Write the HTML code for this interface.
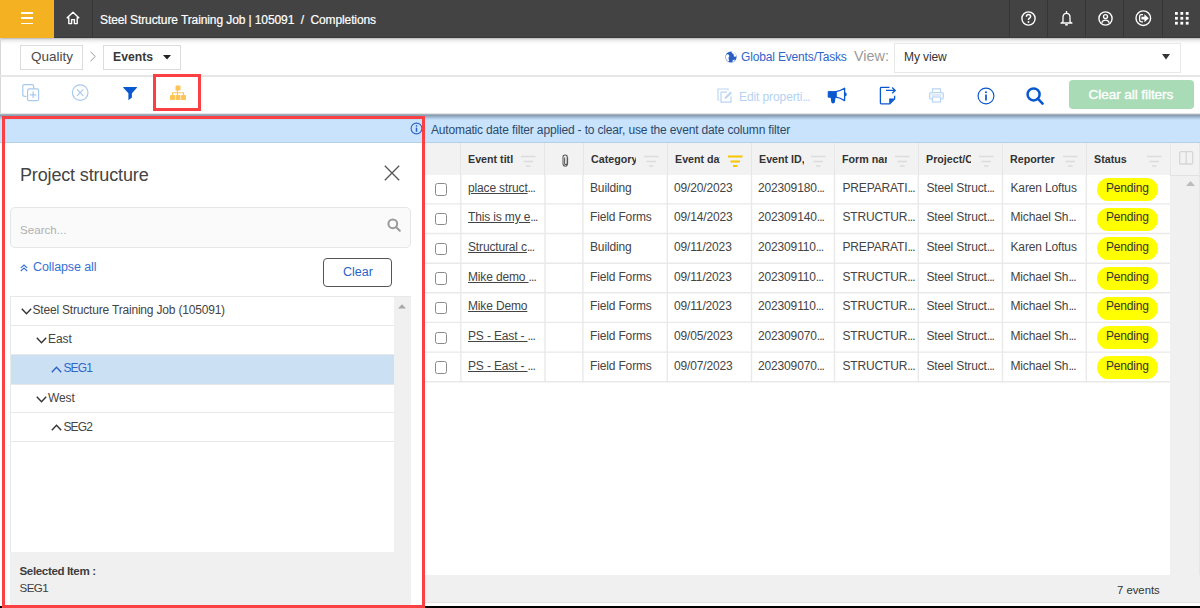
<!DOCTYPE html>
<html><head><meta charset="utf-8">
<style>
*{box-sizing:border-box;margin:0;padding:0}
html,body{width:1200px;height:608px;overflow:hidden;background:#fff;font-family:"Liberation Sans",sans-serif;color:#424242}
.a{position:absolute}
.t{position:absolute;white-space:nowrap;line-height:1}
svg{position:absolute;overflow:visible}
</style></head><body>
<!-- top header -->
<div class="a" style="left:0;top:0;width:1200px;height:38px;background:#434343"></div>
<div class="a" style="left:0;top:0;width:54px;height:38px;background:#f4b223"></div>
<div class="a" style="left:92px;top:0;width:1px;height:38px;background:#353535"></div>
<div class="a" style="left:21px;top:12px;width:12px;height:1.5px;background:#fff"></div>
<div class="a" style="left:21px;top:17.3px;width:12px;height:1.5px;background:#fff"></div>
<div class="a" style="left:21px;top:22.6px;width:12px;height:1.5px;background:#fff"></div>
<svg style="left:66px;top:11px" width="14" height="14" viewBox="0 0 14 14"><path d="M7 1.2 L1.2 6.8 H2.8 V12.6 H5.6 V8.6 H8.4 V12.6 H11.2 V6.8 H12.8 Z" fill="none" stroke="#fff" stroke-width="1.4" stroke-linejoin="round"/></svg>
<div class="t" style="left:100px;top:14px;font-size:12px;color:#fff;letter-spacing:-0.1px;-webkit-text-stroke:0.2px #fff">Steel Structure Training Job | 105091&nbsp; /&nbsp; Completions</div>
<div class="a" style="left:1009px;top:0;width:1px;height:38px;background:#353535"></div>
<div class="a" style="left:1047px;top:0;width:1px;height:38px;background:#353535"></div>
<div class="a" style="left:1085px;top:0;width:1px;height:38px;background:#353535"></div>
<div class="a" style="left:1123px;top:0;width:1px;height:38px;background:#353535"></div>
<div class="a" style="left:1162px;top:0;width:1px;height:38px;background:#353535"></div>
<!-- help -->
<svg style="left:1021px;top:11px" width="15" height="15" viewBox="0 0 15 15"><circle cx="7.5" cy="7.5" r="6.6" fill="none" stroke="#fff" stroke-width="1.4"/><path d="M5.4 5.8 Q5.4 3.6 7.5 3.6 Q9.6 3.6 9.6 5.6 Q9.6 6.8 8.2 7.4 Q7.5 7.8 7.5 9" fill="none" stroke="#fff" stroke-width="1.5"/><circle cx="7.5" cy="11" r="0.9" fill="#fff"/></svg>
<!-- bell -->
<svg style="left:1059px;top:10px" width="15" height="16" viewBox="0 0 15 16"><path d="M4 11.6 V7.4 Q4 3.4 7.5 3.4 Q11 3.4 11 7.4 V11.6 Q11.6 12.6 13 13 H2 Q3.4 12.6 4 11.6 Z" fill="none" stroke="#fff" stroke-width="1.3" stroke-linejoin="round"/><path d="M7.5 1 V3.4" stroke="#fff" stroke-width="1.4"/><path d="M6.2 14.8 H8.8" stroke="#fff" stroke-width="1.5"/></svg>
<!-- user -->
<svg style="left:1097.5px;top:10.5px" width="15" height="15" viewBox="0 0 15 15"><circle cx="7.5" cy="7.5" r="6.6" fill="none" stroke="#fff" stroke-width="1.4"/><circle cx="7.5" cy="5.6" r="2" fill="none" stroke="#fff" stroke-width="1.3"/><path d="M3.8 11.8 Q4.6 9.2 7.5 9.2 Q10.4 9.2 11.2 11.8" fill="none" stroke="#fff" stroke-width="1.3"/></svg>
<!-- logout -->
<svg style="left:1135px;top:10px" width="17" height="17" viewBox="0 0 17 17"><circle cx="8.3" cy="8.2" r="7.3" fill="none" stroke="#fff" stroke-width="1.4"/><path d="M8 4.6 H6.3 Q4.6 4.6 4.6 6.3 V10.1 Q4.6 11.8 6.3 11.8 H8" fill="none" stroke="#fff" stroke-width="1.3"/><path d="M6.4 6.8 H9.4 V4.2 L13.8 8.2 L9.4 12.2 V9.6 H6.4 Z" fill="#fff"/></svg>
<!-- grid -->
<svg style="left:1175px;top:12px" width="14" height="13" viewBox="0 0 14 13" fill="#fff"><rect x="0" y="0" width="2.8" height="2.8"/><rect x="5.4" y="0" width="2.8" height="2.8"/><rect x="10.8" y="0" width="2.8" height="2.8"/><rect x="0" y="4.9" width="2.8" height="2.8"/><rect x="5.4" y="4.9" width="2.8" height="2.8"/><rect x="10.8" y="4.9" width="2.8" height="2.8"/><rect x="0" y="9.8" width="2.8" height="2.8"/><rect x="5.4" y="9.8" width="2.8" height="2.8"/><rect x="10.8" y="9.8" width="2.8" height="2.8"/></svg>

<!-- header shadow -->
<div class="a" style="left:54px;top:37px;width:1146px;height:1px;background:#3a3a3a"></div>
<div class="a" style="left:0;top:38px;width:1200px;height:6px;background:linear-gradient(#b8b8b8,#e6e6e6 30%,#f6f6f6 65%,#fff)"></div>
<div class="a" style="left:0;top:38px;width:1px;height:76px;background:#d8d8d8"></div>

<!-- breadcrumb row -->
<div class="a" style="left:20px;top:45px;width:63px;height:25px;border:1px solid #dcdcdc"></div>
<div class="t" style="left:31px;top:49.5px;font-size:13.5px;color:#4a4a4a">Quality</div>
<svg style="left:88.5px;top:51px" width="8" height="11" viewBox="0 0 8 11"><path d="M1.5 0.8 L6.3 5.5 L1.5 10.2" fill="none" stroke="#9a9a9a" stroke-width="1"/></svg>
<div class="a" style="left:103px;top:45px;width:78px;height:25px;border:1px solid #dcdcdc"></div>
<div class="t" style="left:113px;top:50.5px;font-size:12.2px;font-weight:bold;color:#383838">Events</div>
<svg style="left:163px;top:55px" width="8" height="5" viewBox="0 0 8 5"><path d="M0 0 H8 L4 4.5 Z" fill="#222"/></svg>

<svg style="left:725px;top:51px" width="12" height="12" viewBox="0 0 12 12"><circle cx="6" cy="6" r="5.6" fill="#2a5fc4"/><path d="M1.6 3.4 Q3.4 3 4.2 4.4 Q4.6 5.6 3.6 6.4 Q3.2 7.6 4.2 9.4 L3.4 10.6 Q1 9 0.6 6 Z" fill="#fff"/><path d="M6.4 0.6 Q6.6 2.4 8 2.8 Q9 3 8.8 4.2 Q8.4 5.2 9.6 5.8 Q10.6 6 11.4 5 Q11 2 8.4 0.8 Z" fill="#fff"/><path d="M7 10.4 Q8 8.6 9.6 8.4 Q10 9.6 8.6 10.8 Z" fill="#fff"/></svg>
<div class="t" style="left:741px;top:51px;font-size:12px;letter-spacing:-0.16px;color:#2f66c8">Global Events/Tasks</div>
<div class="t" style="left:854px;top:49px;font-size:14.4px;color:#9a9a9a">View:</div>
<div class="a" style="left:894px;top:43px;width:287px;height:30px;border:1px solid #e8e8e8"></div>
<div class="t" style="left:904px;top:50.5px;font-size:12px;letter-spacing:-0.1px;color:#333">My view</div>
<svg style="left:1162px;top:54px" width="8" height="6" viewBox="0 0 8 6"><path d="M0 0 H8 L4 5.5 Z" fill="#333"/></svg>

<div class="a" style="left:0;top:75px;width:1200px;height:1.5px;background:#e6e6e6"></div>

<!-- toolbar -->
<svg style="left:22px;top:84px" width="18" height="18" viewBox="0 0 18 18"><path d="M4.5 12.3 H2.5 Q0.8 12.3 0.8 10.6 V2 Q0.8 0.6 2.3 0.6 H10.2 Q11.6 0.6 11.6 2 V4.8" fill="none" stroke="#a9c9ef" stroke-width="1.2"/><rect x="5.6" y="4.9" width="11" height="11.8" rx="1.5" fill="none" stroke="#a9c9ef" stroke-width="1.2"/><path d="M11.1 7.6 V14 M7.9 10.8 H14.3" stroke="#a9c9ef" stroke-width="1.2"/></svg>
<svg style="left:71px;top:84px" width="18" height="18" viewBox="0 0 18 18"><circle cx="9.2" cy="8.6" r="7.8" fill="none" stroke="#a9c9ef" stroke-width="1.2"/><path d="M6 5.4 L12.4 11.8 M12.4 5.4 L6 11.8" stroke="#a9c9ef" stroke-width="1.2"/></svg>
<svg style="left:123px;top:86.6px" width="15" height="14" viewBox="0 0 15 14"><path d="M0.6 0 H13.6 Q14.4 0 13.9 0.7 L8.9 6.2 V10.4 L5.4 13.3 V6.2 L0.3 0.7 Q-0.2 0 0.6 0 Z" fill="#0a58cf"/></svg>
<div class="a" style="left:153px;top:74px;width:48px;height:37px;border:3px solid #fb4044"></div>
<svg style="left:170px;top:85px" width="17" height="15" viewBox="0 0 17 15" fill="#fcc556"><rect x="5.5" y="0.6" width="5" height="5" rx="0.8"/><rect x="0" y="10" width="5" height="5" rx="0.8"/><rect x="5.5" y="10" width="5" height="5" rx="0.8"/><rect x="11" y="10" width="5" height="5" rx="0.8"/><path d="M7.5 5 V10 M2.5 10 V7.8 H13.5 V10" fill="none" stroke="#fcc556" stroke-width="1.1"/></svg>

<svg style="left:717px;top:88px" width="16" height="15" viewBox="0 0 16 15"><path d="M2.5 12 H1 V1 H11 V2.5" fill="none" stroke="#b9d5f4" stroke-width="1.1"/><path d="M10 4.2 H4 V14.2 H14 V8.5" fill="none" stroke="#b9d5f4" stroke-width="1.2"/><path d="M7.5 11 L8 9 L13.5 3.5 L15 5 L9.5 10.5 Z" fill="#b9d5f4"/></svg>
<div class="t" style="left:739px;top:91px;font-size:12px;letter-spacing:-0.1px;color:#b4d2f3">Edit properti<span style="letter-spacing:-0.9px">...</span></div>
<svg style="left:820px;top:82px" width="80" height="26" viewBox="820 82 80 26"><path d="M828.2 91.6 H836 V97.2 H828.2 Z" fill="#0a58cf" stroke="#0a58cf" stroke-width="1" stroke-linejoin="round"/><path d="M836 91.6 Q840 91 844.6 88.2 V100.6 Q840 97.8 836 97.2 Z" fill="none" stroke="#0a58cf" stroke-width="1.3" stroke-linejoin="round"/><path d="M845.2 92.8 Q846.8 94.4 845.2 96" fill="none" stroke="#0a58cf" stroke-width="1.4"/><path d="M830.6 97 H835.6 L835 101.5 Q835 103.4 833 103.4 Q831.4 103.4 831.2 101.8 Z" fill="#0a58cf"/><path d="M889.5 87.4 H881.2 Q880.4 87.4 880.4 88.2 V103 Q880.4 103.8 881.2 103.8 H889.8 L894.6 99 V95.8" fill="none" stroke="#0a58cf" stroke-width="1.3" stroke-linejoin="round"/><path d="M889.2 103.8 V98.4 H894.6 Z" fill="#0a58cf"/><path d="M886 90.4 H895 M892.2 87.6 L895.2 90.4 L892.2 93.2" fill="none" stroke="#0a58cf" stroke-width="1.3"/></svg>
<svg style="left:929px;top:88px" width="15" height="15" viewBox="0 0 15 15"><path d="M3.5 4.5 V0.8 H11.5 V4.5" fill="none" stroke="#b9d5f4" stroke-width="1.2"/><rect x="0.7" y="4.6" width="13.6" height="6.5" rx="1.5" fill="none" stroke="#b9d5f4" stroke-width="1.3"/><rect x="3.5" y="9" width="8" height="5" fill="#fff" stroke="#b9d5f4" stroke-width="1.2"/><path d="M2.5 7 H12.5" stroke="#b9d5f4" stroke-width="1"/></svg>
<svg style="left:977px;top:86.5px" width="18" height="18" viewBox="0 0 18 18"><circle cx="9" cy="9" r="7.9" fill="none" stroke="#0a58cf" stroke-width="1.15"/><circle cx="9" cy="5.2" r="1" fill="#0a58cf"/><path d="M9 7.4 V13.4" stroke="#0a58cf" stroke-width="1.7"/></svg>
<svg style="left:1026px;top:87px" width="19" height="19" viewBox="0 0 19 19"><circle cx="7.6" cy="7.4" r="6" fill="none" stroke="#0a58cf" stroke-width="2.5"/><path d="M11.8 11.6 L16.6 16.6" stroke="#0a58cf" stroke-width="2.6" stroke-linecap="round"/></svg>
<div class="a" style="left:1069px;top:80px;width:125px;height:29px;border-radius:4px;background:#a9dcb6"></div>
<div class="t" style="left:1088.5px;top:88.2px;font-size:13.6px;letter-spacing:-0.08px;-webkit-text-stroke:0.35px #fff;color:#fff">Clear all filters</div>

<div class="a" style="left:0;top:113px;width:1200px;height:1px;background:#e4e4e4"></div>
<div class="a" style="left:0;top:114px;width:1200px;height:1px;background:#a6b0bb"></div>

<!-- LEFT PANEL -->

<div class="a" style="left:0;top:606px;width:2px;height:2px;background:#000"></div>
<div class="a" style="left:2px;top:143px;width:423px;height:465px;background:#fff"></div>
<div class="a" style="left:0;top:115px;width:425px;height:28px;background:#c9e3fc;border-bottom:1px solid #b6cfe8"></div>
<div class="a" style="left:0;top:115px;width:425px;height:5px;background:linear-gradient(#8196ae,#c9e3fc)"></div>

<svg style="left:410px;top:121.5px" width="13" height="13" viewBox="0 0 13 13"><circle cx="6.5" cy="6.5" r="5.4" fill="none" stroke="#2a62c9" stroke-width="1.1"/><circle cx="6.5" cy="3.9" r="0.8" fill="#2a62c9"/><path d="M6.5 5.6 V9.8" stroke="#2a62c9" stroke-width="1.5"/></svg>
<div class="t" style="left:20px;top:166px;font-size:18px;color:#444;letter-spacing:-0.15px">Project structure</div>
<svg style="left:384px;top:165px" width="16" height="16" viewBox="0 0 16 16"><path d="M0.8 0.8 L15.2 15.2 M15.2 0.8 L0.8 15.2" stroke="#555" stroke-width="1.3"/></svg>
<div class="a" style="left:10px;top:207px;width:401px;height:41px;border:1px solid #e6e6e6;border-radius:5px;background:#fafafa"></div>
<div class="t" style="left:20px;top:224px;font-size:11.6px;color:#b0b0b0">Search...</div>
<svg style="left:387px;top:218px" width="14" height="14" viewBox="0 0 14 14"><circle cx="5.8" cy="5.8" r="4.4" fill="none" stroke="#9a9a9a" stroke-width="2"/><path d="M9 9 L12.8 12.8" stroke="#9a9a9a" stroke-width="2" stroke-linecap="round"/></svg>
<svg style="left:19.5px;top:263.5px" width="8" height="8" viewBox="0 0 8 8"><path d="M0.8 3.9 L4 1 L7.2 3.9 M0.8 7 L4 4.1 L7.2 7" fill="none" stroke="#3570d4" stroke-width="1.1"/></svg>
<div class="t" style="left:33px;top:261.3px;font-size:12.5px;letter-spacing:-0.1px;color:#3570d4">Collapse all</div>
<div class="a" style="left:323px;top:258px;width:69px;height:29px;border:1px solid #555;border-radius:4px"></div>
<div class="t" style="left:343px;top:266px;font-size:12.5px;color:#2a62c9">Clear</div>

<!-- tree -->
<div class="a" style="left:10px;top:296px;width:401px;height:256px;border:1px solid #e8e8e8;border-right:none;border-bottom:none"></div>
<div class="a" style="left:394px;top:297px;width:17px;height:255px;background:#f0f0f0"></div>
<svg style="left:398px;top:303.5px" width="8" height="5" viewBox="0 0 8 5"><path d="M0 4.5 H8 L4 0.3 Z" fill="#a8a8a8"/></svg>
<div class="a" style="left:11px;top:325px;width:383px;height:1px;background:#e8e8e8"></div>
<div class="a" style="left:11px;top:355px;width:383px;height:28.5px;background:#cce0f4"></div>
<div class="a" style="left:11px;top:354px;width:383px;height:1px;background:#e8e8e8"></div>
<div class="a" style="left:11px;top:384px;width:383px;height:1px;background:#e8e8e8"></div>
<div class="a" style="left:11px;top:412px;width:383px;height:1px;background:#e8e8e8"></div>
<div class="a" style="left:11px;top:441px;width:383px;height:1px;background:#e8e8e8"></div>
<svg style="left:21px;top:308px" width="11" height="7" viewBox="0 0 11 7"><path d="M0.8 0.8 L5.5 5.8 L10.2 0.8" fill="none" stroke="#333" stroke-width="1.4"/></svg>
<div class="t" style="left:32.5px;top:304px;font-size:12px;letter-spacing:-0.19px;color:#444">Steel Structure Training Job (105091)</div>
<svg style="left:36px;top:337px" width="11" height="7" viewBox="0 0 11 7"><path d="M0.8 0.8 L5.5 5.8 L10.2 0.8" fill="none" stroke="#333" stroke-width="1.4"/></svg>
<div class="t" style="left:48px;top:333px;font-size:12px;letter-spacing:-0.1px;color:#444">East</div>
<svg style="left:51px;top:366px" width="11" height="7" viewBox="0 0 11 7"><path d="M0.8 6.2 L5.5 1.2 L10.2 6.2" fill="none" stroke="#2a62c9" stroke-width="1.4"/></svg>
<div class="t" style="left:63.5px;top:361.5px;font-size:12px;letter-spacing:-0.9px;color:#2f66c8">SEG1</div>
<svg style="left:36px;top:396px" width="11" height="7" viewBox="0 0 11 7"><path d="M0.8 0.8 L5.5 5.8 L10.2 0.8" fill="none" stroke="#333" stroke-width="1.4"/></svg>
<div class="t" style="left:48px;top:391.5px;font-size:12px;letter-spacing:-0.1px;color:#444">West</div>
<svg style="left:51px;top:424px" width="11" height="7" viewBox="0 0 11 7"><path d="M0.8 6.2 L5.5 1.2 L10.2 6.2" fill="none" stroke="#333" stroke-width="1.4"/></svg>
<div class="t" style="left:63.5px;top:420.5px;font-size:12px;letter-spacing:-0.9px;color:#444">SEG2</div>

<!-- panel footer -->
<div class="a" style="left:10px;top:552px;width:401px;height:53px;background:#f0f0f0"></div>
<div class="t" style="left:19.5px;top:565px;font-size:11.6px;font-weight:bold;letter-spacing:-0.38px;color:#3d3d3d">Selected Item :</div>
<div class="t" style="left:19.5px;top:582px;font-size:11.6px;letter-spacing:-0.6px;color:#3d3d3d">SEG1</div>

<!-- red panel border -->
<div class="a" style="left:2px;top:116px;width:423px;height:492px;border:3px solid #fb4044"></div>

<!-- RIGHT GRID -->
<div class="a" style="left:425px;top:115px;width:775px;height:28px;background:#c9e3fc;border-bottom:1px solid #b6cfe8"></div>
<div class="a" style="left:425px;top:115px;width:775px;height:5px;background:linear-gradient(#8196ae,#c9e3fc)"></div>
<div class="t" style="left:431px;top:123.5px;font-size:12px;letter-spacing:-0.16px;color:#2b4a6b">Automatic date filter applied - to clear, use the event date column filter</div>
<div id="grid"></div>
<div class="a" style="left:425px;top:143px;width:775px;height:32px;background:#f2f2f2"></div>
<div class="a" style="left:1170px;top:175px;width:30px;height:401px;background:#f0f0f0"></div>
<div class="a" style="left:1170px;top:175px;width:30px;height:1px;background:#e2e2e2"></div>
<div class="a" style="left:1199px;top:143px;width:1px;height:460px;background:#e6e6e6"></div>
<div class="a" style="left:460px;top:143px;width:1px;height:32px;background:#e6e6e6"></div>
<div class="a" style="left:544px;top:143px;width:1px;height:32px;background:#e6e6e6"></div>
<div class="a" style="left:583px;top:143px;width:1px;height:32px;background:#e6e6e6"></div>
<div class="a" style="left:667px;top:143px;width:1px;height:32px;background:#e6e6e6"></div>
<div class="a" style="left:751px;top:143px;width:1px;height:32px;background:#e6e6e6"></div>
<div class="a" style="left:834px;top:143px;width:1px;height:32px;background:#e6e6e6"></div>
<div class="a" style="left:918px;top:143px;width:1px;height:32px;background:#e6e6e6"></div>
<div class="a" style="left:1002px;top:143px;width:1px;height:32px;background:#e6e6e6"></div>
<div class="a" style="left:1086px;top:143px;width:1px;height:32px;background:#e6e6e6"></div>
<div class="a" style="left:1170px;top:143px;width:1px;height:32px;background:#e6e6e6"></div>
<svg style="left:0;top:0" width="1200" height="608" viewBox="0 0 1200 608"><g stroke="#e9e9e9" stroke-width="1.4"><line x1="460.9" y1="175" x2="460.9" y2="382.4" /><line x1="545.0" y1="175" x2="545.0" y2="382.4" /><line x1="582.9" y1="175" x2="582.9" y2="382.4" /><line x1="667.3" y1="175" x2="667.3" y2="382.4" /><line x1="751.5" y1="175" x2="751.5" y2="382.4" /><line x1="834.5" y1="175" x2="834.5" y2="382.4" /><line x1="918.3" y1="175" x2="918.3" y2="382.4" /><line x1="1002.5" y1="175" x2="1002.5" y2="382.4" /><line x1="1086.3" y1="175" x2="1086.3" y2="382.4" /><line x1="425" y1="203.9" x2="1170" y2="203.9" /><line x1="425" y1="233.5" x2="1170" y2="233.5" /><line x1="425" y1="263.2" x2="1170" y2="263.2" /><line x1="425" y1="292.8" x2="1170" y2="292.8" /><line x1="425" y1="322.4" x2="1170" y2="322.4" /><line x1="425" y1="352.1" x2="1170" y2="352.1" /><line x1="425" y1="381.7" x2="1170" y2="381.7" /></g></svg>
<div class="t" style="left:468px;top:154.3px;width:45px;overflow:hidden;font-size:10.7px;font-weight:bold;color:#333">Event title</div>
<svg style="left:521px;top:155px" width="15" height="12" viewBox="0 0 15 12"><path d="M0 1.5 H14.5 M2.5 6.5 H12 M5 11 H9.5" stroke="#dcdcdc" stroke-width="1.6"/></svg>
<svg style="left:561.5px;top:153.5px" width="7" height="13" viewBox="0 0 7 13"><path d="M5.6 3.2 V9.6 Q5.6 12.2 3.3 12.2 Q1 12.2 1 9.6 V3 Q1 0.9 3.2 0.9 Q5.2 0.9 5.2 3 V9.4 Q5.2 10.4 3.3 10.4 Q2.6 10.4 2.6 9.4 V3.6" fill="none" stroke="#5a5a5a" stroke-width="1.05"/></svg>
<div class="t" style="left:591px;top:154.3px;width:45px;overflow:hidden;font-size:10.7px;font-weight:bold;color:#333">Category</div>
<svg style="left:644px;top:155px" width="15" height="12" viewBox="0 0 15 12"><path d="M0 1.5 H14.5 M2.5 6.5 H12 M5 11 H9.5" stroke="#dcdcdc" stroke-width="1.6"/></svg>
<div class="t" style="left:675px;top:154.3px;width:45px;overflow:hidden;font-size:10.7px;font-weight:bold;color:#333">Event date</div>
<svg style="left:728px;top:155px" width="15" height="12" viewBox="0 0 15 12"><path d="M0 1.5 H14.5 M2.5 6.5 H12 M5 11 H9.5" stroke="#f7c600" stroke-width="2.2"/></svg>
<div class="t" style="left:759px;top:154.3px;width:45px;overflow:hidden;font-size:10.7px;font-weight:bold;color:#333">Event ID, Prefix</div>
<svg style="left:811px;top:155px" width="15" height="12" viewBox="0 0 15 12"><path d="M0 1.5 H14.5 M2.5 6.5 H12 M5 11 H9.5" stroke="#dcdcdc" stroke-width="1.6"/></svg>
<div class="t" style="left:842px;top:154.3px;width:45px;overflow:hidden;font-size:10.7px;font-weight:bold;color:#333">Form name</div>
<svg style="left:895px;top:155px" width="15" height="12" viewBox="0 0 15 12"><path d="M0 1.5 H14.5 M2.5 6.5 H12 M5 11 H9.5" stroke="#dcdcdc" stroke-width="1.6"/></svg>
<div class="t" style="left:926px;top:154.3px;width:45px;overflow:hidden;font-size:10.7px;font-weight:bold;color:#333">Project/Contract</div>
<svg style="left:979px;top:155px" width="15" height="12" viewBox="0 0 15 12"><path d="M0 1.5 H14.5 M2.5 6.5 H12 M5 11 H9.5" stroke="#dcdcdc" stroke-width="1.6"/></svg>
<div class="t" style="left:1010px;top:154.3px;width:45px;overflow:hidden;font-size:10.7px;font-weight:bold;color:#333">Reporter</div>
<svg style="left:1063px;top:155px" width="15" height="12" viewBox="0 0 15 12"><path d="M0 1.5 H14.5 M2.5 6.5 H12 M5 11 H9.5" stroke="#dcdcdc" stroke-width="1.6"/></svg>
<div class="t" style="left:1094px;top:154.3px;width:45px;overflow:hidden;font-size:10.7px;font-weight:bold;color:#333">Status</div>
<svg style="left:1147px;top:155px" width="15" height="12" viewBox="0 0 15 12"><path d="M0 1.5 H14.5 M2.5 6.5 H12 M5 11 H9.5" stroke="#dcdcdc" stroke-width="1.6"/></svg>
<svg style="left:1179px;top:151px" width="15" height="14" viewBox="0 0 15 14"><rect x="0.7" y="0.7" width="13" height="12.3" rx="1" fill="none" stroke="#d6d6d6" stroke-width="1.3"/><path d="M7.2 0.7 V13" stroke="#d6d6d6" stroke-width="1.3"/></svg>
<svg style="left:1186px;top:181px" width="9" height="5" viewBox="0 0 9 5"><path d="M0 5 H9 L4.5 0 Z" fill="#bcbcbc"/></svg>
<div class="a" style="left:435px;top:183.30px;width:12.3px;height:12.3px;border:1.4px solid #8a8a8a;border-radius:2.5px"></div>
<div class="t" style="left:468px;top:181.50px;font-size:12px;letter-spacing:-0.15px;color:#444"><span style="text-decoration:underline">place struct</span><span style="letter-spacing:-0.9px">...</span></div>
<div class="t" style="left:590px;top:181.50px;font-size:12px;letter-spacing:-0.15px;color:#444">Building</div>
<div class="t" style="left:674px;top:181.50px;font-size:12px;letter-spacing:-0.15px;color:#444">09/20/2023</div>
<div class="t" style="left:758px;top:181.50px;font-size:12px;letter-spacing:-0.15px;color:#444">202309180<span style="letter-spacing:-0.9px">...</span></div>
<div class="t" style="left:842.5px;top:181.50px;font-size:12px;letter-spacing:-0.15px;color:#444">PREPARATI<span style="letter-spacing:-0.9px">...</span></div>
<div class="t" style="left:926.5px;top:181.50px;font-size:12px;letter-spacing:-0.15px;color:#444">Steel Struct<span style="letter-spacing:-0.9px">...</span></div>
<div class="t" style="left:1010.5px;top:181.50px;font-size:12px;letter-spacing:-0.15px;color:#444">Karen Loftus</div>
<div class="a" style="left:1097px;top:178.00px;width:61px;height:23px;border-radius:12px;background:#ffff00"></div>
<div class="t" style="left:1106px;top:181.50px;font-size:12px;letter-spacing:-0.2px;color:#333">Pending</div>
<div class="a" style="left:435px;top:212.97px;width:12.3px;height:12.3px;border:1.4px solid #8a8a8a;border-radius:2.5px"></div>
<div class="t" style="left:468px;top:211.17px;font-size:12px;letter-spacing:-0.15px;color:#444"><span style="text-decoration:underline">This is my e</span><span style="letter-spacing:-0.9px">...</span></div>
<div class="t" style="left:590px;top:211.17px;font-size:12px;letter-spacing:-0.15px;color:#444">Field Forms</div>
<div class="t" style="left:674px;top:211.17px;font-size:12px;letter-spacing:-0.15px;color:#444">09/14/2023</div>
<div class="t" style="left:758px;top:211.17px;font-size:12px;letter-spacing:-0.15px;color:#444">202309140<span style="letter-spacing:-0.9px">...</span></div>
<div class="t" style="left:842.5px;top:211.17px;font-size:12px;letter-spacing:-0.15px;color:#444">STRUCTUR<span style="letter-spacing:-0.9px">...</span></div>
<div class="t" style="left:926.5px;top:211.17px;font-size:12px;letter-spacing:-0.15px;color:#444">Steel Struct<span style="letter-spacing:-0.9px">...</span></div>
<div class="t" style="left:1010.5px;top:211.17px;font-size:12px;letter-spacing:-0.15px;color:#444">Michael Sh<span style="letter-spacing:-0.9px">...</span></div>
<div class="a" style="left:1097px;top:207.67px;width:61px;height:23px;border-radius:12px;background:#ffff00"></div>
<div class="t" style="left:1106px;top:211.17px;font-size:12px;letter-spacing:-0.2px;color:#333">Pending</div>
<div class="a" style="left:435px;top:242.64px;width:12.3px;height:12.3px;border:1.4px solid #8a8a8a;border-radius:2.5px"></div>
<div class="t" style="left:468px;top:240.84px;font-size:12px;letter-spacing:-0.15px;color:#444"><span style="text-decoration:underline">Structural c</span><span style="letter-spacing:-0.9px">...</span></div>
<div class="t" style="left:590px;top:240.84px;font-size:12px;letter-spacing:-0.15px;color:#444">Building</div>
<div class="t" style="left:674px;top:240.84px;font-size:12px;letter-spacing:-0.15px;color:#444">09/11/2023</div>
<div class="t" style="left:758px;top:240.84px;font-size:12px;letter-spacing:-0.15px;color:#444">202309110<span style="letter-spacing:-0.9px">...</span></div>
<div class="t" style="left:842.5px;top:240.84px;font-size:12px;letter-spacing:-0.15px;color:#444">PREPARATI<span style="letter-spacing:-0.9px">...</span></div>
<div class="t" style="left:926.5px;top:240.84px;font-size:12px;letter-spacing:-0.15px;color:#444">Steel Struct<span style="letter-spacing:-0.9px">...</span></div>
<div class="t" style="left:1010.5px;top:240.84px;font-size:12px;letter-spacing:-0.15px;color:#444">Karen Loftus</div>
<div class="a" style="left:1097px;top:237.34px;width:61px;height:23px;border-radius:12px;background:#ffff00"></div>
<div class="t" style="left:1106px;top:240.84px;font-size:12px;letter-spacing:-0.2px;color:#333">Pending</div>
<div class="a" style="left:435px;top:272.31px;width:12.3px;height:12.3px;border:1.4px solid #8a8a8a;border-radius:2.5px"></div>
<div class="t" style="left:468px;top:270.51px;font-size:12px;letter-spacing:-0.15px;color:#444"><span style="text-decoration:underline">Mike demo </span><span style="letter-spacing:-0.9px">...</span></div>
<div class="t" style="left:590px;top:270.51px;font-size:12px;letter-spacing:-0.15px;color:#444">Field Forms</div>
<div class="t" style="left:674px;top:270.51px;font-size:12px;letter-spacing:-0.15px;color:#444">09/11/2023</div>
<div class="t" style="left:758px;top:270.51px;font-size:12px;letter-spacing:-0.15px;color:#444">202309110<span style="letter-spacing:-0.9px">...</span></div>
<div class="t" style="left:842.5px;top:270.51px;font-size:12px;letter-spacing:-0.15px;color:#444">STRUCTUR<span style="letter-spacing:-0.9px">...</span></div>
<div class="t" style="left:926.5px;top:270.51px;font-size:12px;letter-spacing:-0.15px;color:#444">Steel Struct<span style="letter-spacing:-0.9px">...</span></div>
<div class="t" style="left:1010.5px;top:270.51px;font-size:12px;letter-spacing:-0.15px;color:#444">Michael Sh<span style="letter-spacing:-0.9px">...</span></div>
<div class="a" style="left:1097px;top:267.01px;width:61px;height:23px;border-radius:12px;background:#ffff00"></div>
<div class="t" style="left:1106px;top:270.51px;font-size:12px;letter-spacing:-0.2px;color:#333">Pending</div>
<div class="a" style="left:435px;top:301.98px;width:12.3px;height:12.3px;border:1.4px solid #8a8a8a;border-radius:2.5px"></div>
<div class="t" style="left:468px;top:300.18px;font-size:12px;letter-spacing:-0.15px;color:#444"><span style="text-decoration:underline">Mike Demo</span></div>
<div class="t" style="left:590px;top:300.18px;font-size:12px;letter-spacing:-0.15px;color:#444">Field Forms</div>
<div class="t" style="left:674px;top:300.18px;font-size:12px;letter-spacing:-0.15px;color:#444">09/11/2023</div>
<div class="t" style="left:758px;top:300.18px;font-size:12px;letter-spacing:-0.15px;color:#444">202309110<span style="letter-spacing:-0.9px">...</span></div>
<div class="t" style="left:842.5px;top:300.18px;font-size:12px;letter-spacing:-0.15px;color:#444">STRUCTUR<span style="letter-spacing:-0.9px">...</span></div>
<div class="t" style="left:926.5px;top:300.18px;font-size:12px;letter-spacing:-0.15px;color:#444">Steel Struct<span style="letter-spacing:-0.9px">...</span></div>
<div class="t" style="left:1010.5px;top:300.18px;font-size:12px;letter-spacing:-0.15px;color:#444">Michael Sh<span style="letter-spacing:-0.9px">...</span></div>
<div class="a" style="left:1097px;top:296.68px;width:61px;height:23px;border-radius:12px;background:#ffff00"></div>
<div class="t" style="left:1106px;top:300.18px;font-size:12px;letter-spacing:-0.2px;color:#333">Pending</div>
<div class="a" style="left:435px;top:331.65px;width:12.3px;height:12.3px;border:1.4px solid #8a8a8a;border-radius:2.5px"></div>
<div class="t" style="left:468px;top:329.85px;font-size:12px;letter-spacing:-0.15px;color:#444"><span style="text-decoration:underline">PS - East - </span><span style="letter-spacing:-0.9px">...</span></div>
<div class="t" style="left:590px;top:329.85px;font-size:12px;letter-spacing:-0.15px;color:#444">Field Forms</div>
<div class="t" style="left:674px;top:329.85px;font-size:12px;letter-spacing:-0.15px;color:#444">09/05/2023</div>
<div class="t" style="left:758px;top:329.85px;font-size:12px;letter-spacing:-0.15px;color:#444">202309070<span style="letter-spacing:-0.9px">...</span></div>
<div class="t" style="left:842.5px;top:329.85px;font-size:12px;letter-spacing:-0.15px;color:#444">STRUCTUR<span style="letter-spacing:-0.9px">...</span></div>
<div class="t" style="left:926.5px;top:329.85px;font-size:12px;letter-spacing:-0.15px;color:#444">Steel Struct<span style="letter-spacing:-0.9px">...</span></div>
<div class="t" style="left:1010.5px;top:329.85px;font-size:12px;letter-spacing:-0.15px;color:#444">Michael Sh<span style="letter-spacing:-0.9px">...</span></div>
<div class="a" style="left:1097px;top:326.35px;width:61px;height:23px;border-radius:12px;background:#ffff00"></div>
<div class="t" style="left:1106px;top:329.85px;font-size:12px;letter-spacing:-0.2px;color:#333">Pending</div>
<div class="a" style="left:435px;top:361.32px;width:12.3px;height:12.3px;border:1.4px solid #8a8a8a;border-radius:2.5px"></div>
<div class="t" style="left:468px;top:359.52px;font-size:12px;letter-spacing:-0.15px;color:#444"><span style="text-decoration:underline">PS - East - </span><span style="letter-spacing:-0.9px">...</span></div>
<div class="t" style="left:590px;top:359.52px;font-size:12px;letter-spacing:-0.15px;color:#444">Field Forms</div>
<div class="t" style="left:674px;top:359.52px;font-size:12px;letter-spacing:-0.15px;color:#444">09/07/2023</div>
<div class="t" style="left:758px;top:359.52px;font-size:12px;letter-spacing:-0.15px;color:#444">202309070<span style="letter-spacing:-0.9px">...</span></div>
<div class="t" style="left:842.5px;top:359.52px;font-size:12px;letter-spacing:-0.15px;color:#444">STRUCTUR<span style="letter-spacing:-0.9px">...</span></div>
<div class="t" style="left:926.5px;top:359.52px;font-size:12px;letter-spacing:-0.15px;color:#444">Steel Struct<span style="letter-spacing:-0.9px">...</span></div>
<div class="t" style="left:1010.5px;top:359.52px;font-size:12px;letter-spacing:-0.15px;color:#444">Michael Sh<span style="letter-spacing:-0.9px">...</span></div>
<div class="a" style="left:1097px;top:356.02px;width:61px;height:23px;border-radius:12px;background:#ffff00"></div>
<div class="t" style="left:1106px;top:359.52px;font-size:12px;letter-spacing:-0.2px;color:#333">Pending</div>
<div class="a" style="left:425px;top:575px;width:775px;height:28px;background:#f0f0f0;border-bottom:1px solid #e2e2e2"></div>
<div class="t" style="left:1117px;top:585px;font-size:11.3px;color:#333">7 events</div>
<div class="a" style="left:425px;top:606px;width:775px;height:2px;background:#000"></div>
</body></html>
